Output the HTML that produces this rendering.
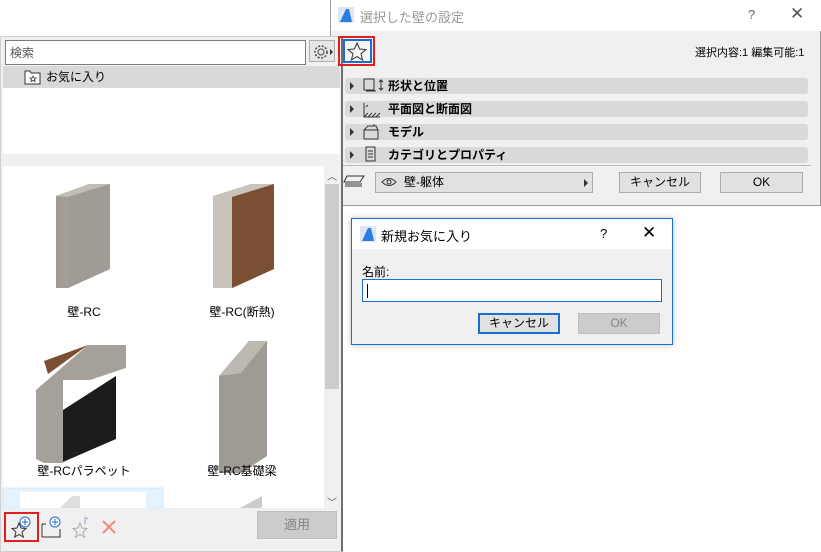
<!DOCTYPE html>
<html><head><meta charset="utf-8"><style>
*{box-sizing:border-box;margin:0;padding:0}
body{width:821px;height:552px;position:relative;background:#fff;font-family:"Liberation Sans","Noto Sans CJK JP",sans-serif;font-size:12px;color:#000;overflow:hidden}
.a{position:absolute}
.btn{position:absolute;background:#e1e1e1;border:1px solid #adadad;text-align:center;font-size:12px}
.bar{position:absolute;left:345px;width:463px;height:16px;background:#d9d9d9;border-radius:3px;font-weight:bold;font-size:12px;line-height:16px}
.tri{position:absolute;left:5px;top:4px;width:0;height:0;border-left:4px solid #333;border-top:4px solid transparent;border-bottom:4px solid transparent}
</style></head><body>
<!-- top dialog -->
<div class="a" style="left:330px;top:0;width:491px;height:206px;background:#f0f0f0;border:1px solid #999"></div>
<div class="a" style="left:331px;top:0;width:490px;height:31px;background:#fff"></div>
<svg class="a" style="left:338px;top:7px" width="16" height="16"><rect width="16" height="16" fill="#dde6f2"/><path d="M2 15L8 2h3l3 13z" fill="#2a7de1"/></svg>
<div class="a" style="left:360px;top:7px;color:#999;font-size:13px">選択した壁の設定</div>
<div class="a" style="left:748px;top:7px;color:#666;font-size:13px">?</div>
<div class="a" style="left:790px;top:4px;color:#555;font-size:17px">✕</div>
<div class="a" style="left:695px;top:44px;font-size:11px">選択内容:1 編集可能:1</div>
<div class="bar" style="top:78px"><div class="tri"></div><span class="a" style="left:43px">形状と位置</span></div>
<div class="bar" style="top:101px"><div class="tri"></div><span class="a" style="left:43px">平面図と断面図</span></div>
<div class="bar" style="top:124px"><div class="tri"></div><span class="a" style="left:43px">モデル</span></div>
<div class="bar" style="top:147px"><div class="tri"></div><span class="a" style="left:43px">カテゴリとプロパティ</span></div>
<svg class="a" style="left:362px;top:77px" width="30" height="88" fill="none" stroke="#333">
<rect x="2" y="2" width="10" height="11"/><path d="M4 14h10M19 3v10M17 5l2-2 2 2M17 11l2 2 2-2"/>
<path d="M2 26v14h16M2 40l4-4M6 40l4-4M10 40l4-4M14 40l4-4M4 30l2-2"/>
<path d="M2 53h14v9H2zM2 53l4-4h8l2 4M12 49v-2"/>
<path d="M4 70h9v14H4zM6 74h5M6 77h5M6 80h5"/></svg>
<div class="a" style="left:331px;top:165px;width:480px;height:1px;background:#bbb"></div>
<div class="btn" style="left:375px;top:172px;width:218px;height:21px;line-height:19px;text-align:left;padding-left:28px">壁-躯体</div>
<svg class="a" style="left:381px;top:176px" width="16" height="12"><path d="M1 6q7-7 14 0q-7 7-14 0z" fill="none" stroke="#333"/><circle cx="8" cy="6" r="2" fill="none" stroke="#333"/></svg>
<div class="a" style="left:584px;top:179px;border-left:4px solid #333;border-top:4px solid transparent;border-bottom:4px solid transparent"></div>
<div class="btn" style="left:619px;top:172px;width:82px;height:21px;line-height:19px">キャンセル</div>
<div class="btn" style="left:720px;top:172px;width:83px;height:21px;line-height:19px">OK</div>

<!-- left panel -->
<div class="a" style="left:0;top:36px;width:343px;height:516px;background:#f0f0f0;border:1px solid #d0d0d0;border-right:2px solid #707070"></div>
<div class="a" style="left:5px;top:40px;width:301px;height:25px;background:#fff;border:1px solid #7a7a7a;padding:3px 4px;color:#555">検索</div>
<div class="a" style="left:309px;top:40px;width:26px;height:22px;border:1px solid #adadad;background:#e6e6e6"><svg width="26" height="22"><circle cx="11" cy="11" r="6" fill="none" stroke="#444" stroke-width="1.5" stroke-dasharray="2 1.6"/><circle cx="11" cy="11" r="3" fill="none" stroke="#444"/><path d="M20 8l3 3-3 3z" fill="#333"/></svg></div>
<div class="a" style="left:3px;top:66px;width:337px;height:22px;background:#d9d9d9"></div>
<svg class="a" style="left:24px;top:69px" width="18" height="16"><path d="M1 2h5l1 2h9v11H1z" fill="#fff" stroke="#333"/><path d="M9 7l1 2 2 0-1.5 1.5.5 2-2-1-2 1 .5-2L6 9h2z" fill="none" stroke="#333" stroke-width=".8"/></svg>
<div class="a" style="left:46px;top:68px;font-size:12px">お気に入り</div>
<div class="a" style="left:3px;top:88px;width:337px;height:66px;background:#fff"></div>
<div class="a" style="left:3px;top:166px;width:321px;height:342px;background:#fff"></div>
<div class="a" style="left:324px;top:166px;width:16px;height:342px;background:#f0f0f0"></div>
<div class="a" style="left:325px;top:184px;width:14px;height:205px;background:#cdcdcd"></div>
<div class="a" style="left:327px;top:168px;font-size:10px;color:#555">︿</div>
<div class="a" style="left:327px;top:494px;font-size:10px;color:#555">﹀</div>
<svg class="a" style="left:0;top:166px" width="324" height="342">
<defs><linearGradient id="g" x1="0" x2="1"><stop offset="0" stop-color="#9e9a93"/><stop offset=".5" stop-color="#aaa69f"/><stop offset="1" stop-color="#8f8b85"/></linearGradient></defs>
<path d="M56 30l33-12h21v85L68 122H56z" fill="url(#g)"/><path d="M56 30l33-12h21L68 31z" fill="#c2beb6"/><path d="M68 31l42-13v85L68 122z" fill="#a09c95"/>
<path d="M213 30l38-12h23v85L233 122h-20z" fill="#c8c4bb"/><path d="M232 31l42-13v85L232 122z" fill="#7b4f33"/>
<path d="M36 224l52-45h38v23L90 214l-6 0v0H63v83H44l-8-4z" fill="#a5a19a"/><path d="M63 244l53-34v63L63 296z" fill="#1c1c1c"/><path d="M44 195l44-16-40 29z" fill="#7b4f33"/>
<path d="M219 210l30-35h18v115l-26 17h-22z" fill="#9f9b94"/><path d="M219 210l30-35h18l-26 32z" fill="#bdb9b1"/>
<rect x="3" y="322" width="160" height="20" fill="#e5f3ff" stroke="#cce8ff"/><rect x="20" y="326" width="126" height="16" fill="#fff"/>
<path d="M60 342l12-12 8 0v12z" fill="#ddd"/><path d="M240 342l22-12v12z" fill="#ccc"/>
</svg>
<div class="a" style="left:0;top:303px;width:168px;text-align:center">壁-RC</div>
<div class="a" style="left:160px;top:303px;width:164px;text-align:center">壁-RC(断熱)</div>
<div class="a" style="left:0;top:462px;width:168px;text-align:center">壁-RCパラペット</div>
<div class="a" style="left:160px;top:462px;width:164px;text-align:center">壁-RC基礎梁</div>
<div class="a" style="left:4px;top:512px;width:35px;height:30px;border:2px solid #e02020"></div>
<svg class="a" style="left:8px;top:514px" width="120" height="28">
<path d="M11 9l2 5 5 .5-4 3.5 1.3 5-4.3-2.6-4.3 2.6 1.3-5-4-3.5 5-.5z" fill="none" stroke="#333"/><circle cx="17" cy="8" r="5" fill="#fff" stroke="#1a6fd0"/><path d="M17 5v6M14 8h6" stroke="#1a6fd0"/>
<path d="M34 10h4M34 10v13h18v-8" fill="none" stroke="#333"/><circle cx="47" cy="8" r="5" fill="#fff" stroke="#1a6fd0"/><path d="M47 5v6M44 8h6" stroke="#1a6fd0"/>
<path d="M72 9l2 5 5 .5-4 3.5 1.3 5-4.3-2.6-4.3 2.6 1.3-5-4-3.5 5-.5z" fill="none" stroke="#aaa"/><path d="M77 4v6M80 5l-3 -2" stroke="#7aa7dd" fill="none"/>
<path d="M95 7l12 12M107 7L95 19" stroke="#f08a80" stroke-width="2"/></svg>
<div class="btn" style="left:257px;top:511px;width:80px;height:28px;line-height:26px;background:#ccc;border-color:#bfbfbf;color:#838383;font-size:13px">適用</div>

<!-- star button overlaying -->
<div class="a" style="left:338px;top:36px;width:37px;height:30px;border:2px solid #e02020"></div>
<div class="a" style="left:343px;top:39px;width:29px;height:24px;border:2px solid #1a6fd0;background:#f5f5f5"></div>
<svg class="a" style="left:346px;top:41px" width="22" height="20"><path d="M11 2l2.6 6 6.4.5-5 4.2 1.6 6.3L11 15.6 5.4 19 7 12.7 2 8.5l6.4-.5z" fill="none" stroke="#333"/></svg>
<svg class="a" style="left:342px;top:172px" width="30" height="18"><path d="M5 4h17l-4 6H2zM3 12h17M3 14h17" fill="none" stroke="#333"/></svg>

<!-- new favorite dialog -->
<div class="a" style="left:351px;top:218px;width:322px;height:127px;background:#f0f0f0;border:1px solid #1a6fd0;box-shadow:0 0 6px rgba(0,0,0,.25)"></div>
<div class="a" style="left:352px;top:219px;width:320px;height:30px;background:#fff"></div>
<svg class="a" style="left:360px;top:226px" width="16" height="16"><rect width="16" height="16" fill="#dde6f2"/><path d="M2 15L8 2h3l3 13z" fill="#2a7de1"/></svg>
<div class="a" style="left:381px;top:226px;font-size:13px">新規お気に入り</div>
<div class="a" style="left:600px;top:226px;font-size:13px">?</div>
<div class="a" style="left:642px;top:223px;font-size:17px">✕</div>
<div class="a" style="left:362px;top:263px">名前:</div>
<div class="a" style="left:362px;top:279px;width:300px;height:23px;background:#fff;border:1px solid #1a6fd0"></div>
<div class="a" style="left:367px;top:284px;width:1px;height:14px;background:#000"></div>
<div class="btn" style="left:478px;top:313px;width:82px;height:21px;line-height:17px;border:2px solid #1a6fd0">キャンセル</div>
<div class="btn" style="left:578px;top:313px;width:82px;height:21px;line-height:19px;background:#ccc;border-color:#bfbfbf;color:#838383">OK</div>
</body></html>
